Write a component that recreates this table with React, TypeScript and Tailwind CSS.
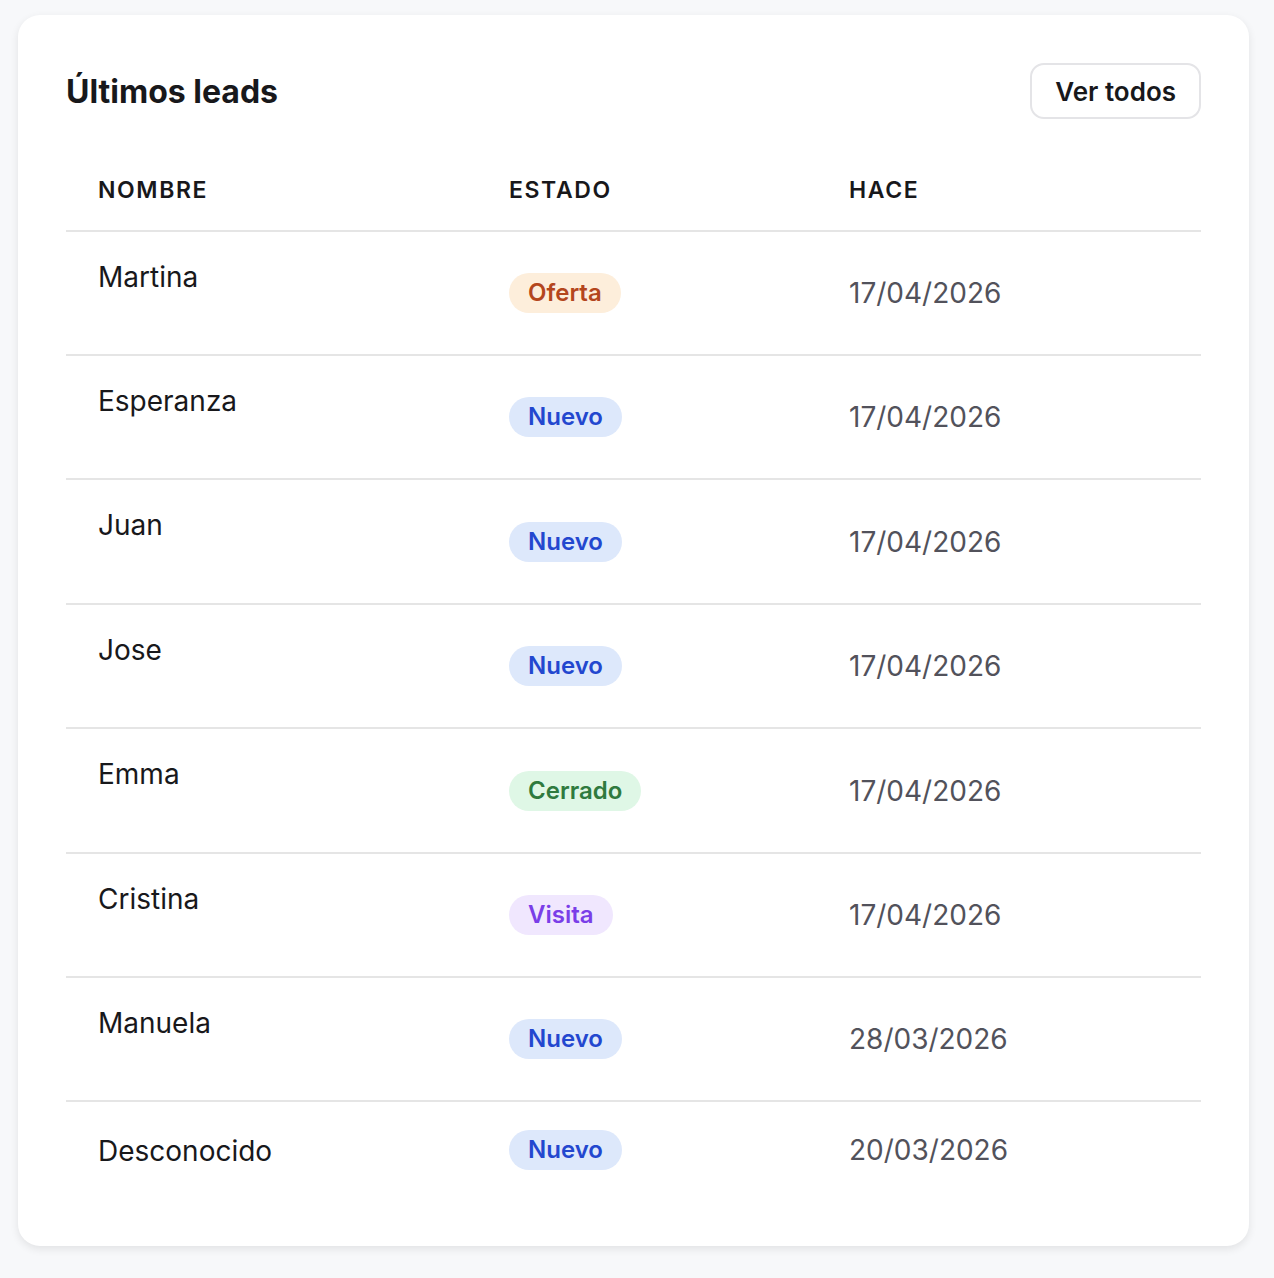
type Lead = {
  name: string;
  status: 'Oferta' | 'Nuevo' | 'Cerrado' | 'Visita';
  date: string;
};

const leads: Lead[] = [
  { name: 'Martina', status: 'Oferta', date: '17/04/2026' },
  { name: 'Esperanza', status: 'Nuevo', date: '17/04/2026' },
  { name: 'Juan', status: 'Nuevo', date: '17/04/2026' },
  { name: 'Jose', status: 'Nuevo', date: '17/04/2026' },
  { name: 'Emma', status: 'Cerrado', date: '17/04/2026' },
  { name: 'Cristina', status: 'Visita', date: '17/04/2026' },
  { name: 'Manuela', status: 'Nuevo', date: '28/03/2026' },
  { name: 'Desconocido', status: 'Nuevo', date: '20/03/2026' },
];

const badgeStyles: Record<Lead['status'], string> = {
  Oferta: 'bg-[#fdeedb] text-[#b4461d]',
  Nuevo: 'bg-[#dde8fb] text-[#2347cf]',
  Cerrado: 'bg-[#dff7e6] text-[#2f7a3e]',
  Visita: 'bg-[#f0e7fe] text-[#7a3ee8]',
};

function StatusBadge({ status }: { status: Lead['status'] }) {
  return (
    <span
      className={`inline-flex h-[40px] items-center rounded-full px-[19px] text-[24px] font-semibold ${badgeStyles[status]}`}
    >
      {status}
    </span>
  );
}

export default function App() {
  return (
    <div className="min-h-[1278px] bg-[#f7f8fa] px-[18px] pt-[15px] font-['Inter',sans-serif] text-[#18181b]">
      <div className="w-[1231px] rounded-[22px] bg-white px-[48px] pb-[48px] pt-[48px] shadow-[0_3px_8px_rgba(0,0,0,0.09)]">
        {/* header */}
        <div className="flex h-[56px] items-center justify-between">
          <h2 className="pt-[2px] text-[32px] font-bold">Últimos leads</h2>
          <button className="h-[56px] rounded-[14px] border-2 border-[#e4e4e7] px-[23px] text-[26px] font-semibold">
            Ver todos
          </button>
        </div>

        <table className="mt-[20px] w-full border-collapse text-left">
          <thead>
            <tr className="border-b-2 border-[#e5e5e5]">
              <th className="w-[411px] px-[32px] pb-[25px] pt-[36px] text-[23px] leading-[30px] font-semibold tracking-[0.07em]">NOMBRE</th>
              <th className="w-[340px] px-[32px] pb-[25px] pt-[36px] text-[23px] leading-[30px] font-semibold tracking-[0.07em]">ESTADO</th>
              <th className="px-[32px] pb-[25px] pt-[36px] text-[23px] leading-[30px] font-semibold tracking-[0.07em]">HACE</th>
            </tr>
          </thead>
          <tbody>
            {leads.map((lead, i) => {
              const last = i === leads.length - 1;
              const pad = last ? 'pb-[30px] pt-[32px]' : i === 2 || i === 4 ? 'pb-[37px] pt-[28px]' : 'pb-[36px] pt-[28px]';
              return (
                <tr key={lead.name} className={last ? '' : 'border-b-2 border-[#e5e5e5]'}>
                  <td className={`px-[32px] align-middle ${pad}`}>
                    <div className="text-[28px] leading-[34px]">{lead.name}</div>
                    {!last && <div className="h-[24px]" />}
                  </td>
                  <td className="px-[32px] align-middle">
                    <StatusBadge status={lead.status} />
                  </td>
                  <td className="px-[32px] align-middle text-[28px] text-[#52525b]">{lead.date}</td>
                </tr>
              );
            })}
          </tbody>
        </table>
      </div>
    </div>
  );
}
